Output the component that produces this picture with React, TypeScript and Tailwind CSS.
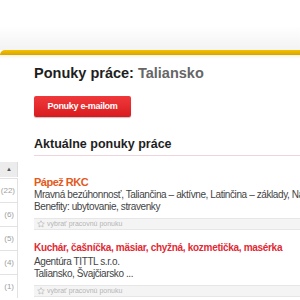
import React from "react";

const StarIcon = () => (
  <svg width="8" height="8" viewBox="0 0 24 24" fill="none" stroke="#b8b8b8" strokeWidth="2" strokeLinejoin="round">
    <path d="M12 2l3 6.5 7 .8-5.2 4.8 1.5 7L12 17.6 5.7 21.1l1.5-7L2 9.3l7-.8z" />
  </svg>
);

const SelectBar = () => (
  <div className="flex items-center gap-[2px] h-[12px] bg-[#f4f4f4] border-t border-b border-[#e6e6e6] pl-[3px] text-[7px] text-[#b5b5b5] whitespace-nowrap">
    <StarIcon />
    <span>vybrať pracovnú ponuku</span>
  </div>
);

export default function App() {
  return (
    <div
      className="w-[300px] h-[300px] overflow-hidden bg-white"
      style={{ fontFamily: "'Liberation Sans', Arial, sans-serif" }}
    >
      {/* header band */}
      <div className="h-[50px] bg-gradient-to-b from-white via-white to-[#f3f3f3]" />
      <div className="h-[5px] rounded-tl-[12px] bg-gradient-to-b from-[#f2c200] to-[#d9a400]" />
      <div className="h-[4px] bg-gradient-to-b from-[#f7f3e3] to-white" />

      <div className="flex">
        {/* sidebar */}
        <div className="w-[18px] shrink-0 pt-[103px] text-[8px] text-[#a0a0a0]">
          <div className="h-[15px] bg-[#ececec] border-r border-[#dcdcdc] flex items-center justify-end pr-[5px] text-[6px] text-[#555]">▲</div>
          <div className="h-[24px] border-t border-r border-[#e2e2e2] flex items-center justify-end pr-[2px] mt-[1px]">(22)</div>
          <div className="h-[24px] border-t border-r border-[#e2e2e2] flex items-center justify-end pr-[3px]">(6)</div>
          <div className="h-[24px] border-t border-r border-[#e2e2e2] flex items-center justify-end pr-[3px]">(5)</div>
          <div className="h-[24px] border-t border-r border-[#e2e2e2] flex items-center justify-end pr-[3px]">(4)</div>
          <div className="h-[24px] border-t border-r border-[#e2e2e2] flex items-center justify-end pr-[3px]">(1)</div>
        </div>

        {/* content */}
        <div className="flex-1 pl-[16px] min-w-0">
          <h1 className="mt-[5px] text-[14.5px] font-bold leading-[18px] text-[#1e1e1e] whitespace-nowrap">
            Ponuky práce: <span className="text-[#666]">Taliansko</span>
          </h1>
          <button className="mt-[14px] w-[97px] h-[21px] rounded-[2px] bg-gradient-to-b from-[#f0383a] to-[#d81a1e] text-white text-[9px] font-bold tracking-[-0.3px] shadow-[0_1px_1px_rgba(0,0,0,0.25)]">
            Ponuky e-mailom
          </button>
          <h2 className="mt-[19px] text-[12.5px] font-bold leading-[16px] text-[#1e1e1e] whitespace-nowrap">Aktuálne ponuky práce</h2>
          <div className="mt-[3px] h-px bg-[#ecd6dc]" />

          <div className="mt-[20px] text-[11px] font-bold leading-[13px] tracking-[-0.5px] text-[#e35a1c]">Pápež RKC</div>
          <div className="text-[10px] leading-[12px] tracking-[-0.4px] text-[#444] whitespace-nowrap">
            Mravná bezúhonnosť, Taliančina – aktívne, Latinčina – základy, Nástup
          </div>
          <div className="text-[10px] leading-[12px] tracking-[-0.4px] text-[#444] whitespace-nowrap">Benefity: ubytovanie, stravenky</div>
          <div className="mt-[5px]"><SelectBar /></div>

          <div className="mt-[11px] text-[10px] font-bold leading-[13px] tracking-[-0.3px] text-[#df2a35] whitespace-nowrap">
            Kuchár, čašníčka, mäsiar, chyžná, kozmetička, masérka
          </div>
          <div className="mt-[2px] text-[10px] leading-[12px] tracking-[-0.4px] text-[#444] whitespace-nowrap">Agentúra TITTL s.r.o.</div>
          <div className="text-[10px] leading-[12px] tracking-[-0.4px] text-[#444] whitespace-nowrap">Taliansko, Švajčiarsko ...</div>
          <div className="mt-[5px]"><SelectBar /></div>
        </div>
      </div>
    </div>
  );
}
